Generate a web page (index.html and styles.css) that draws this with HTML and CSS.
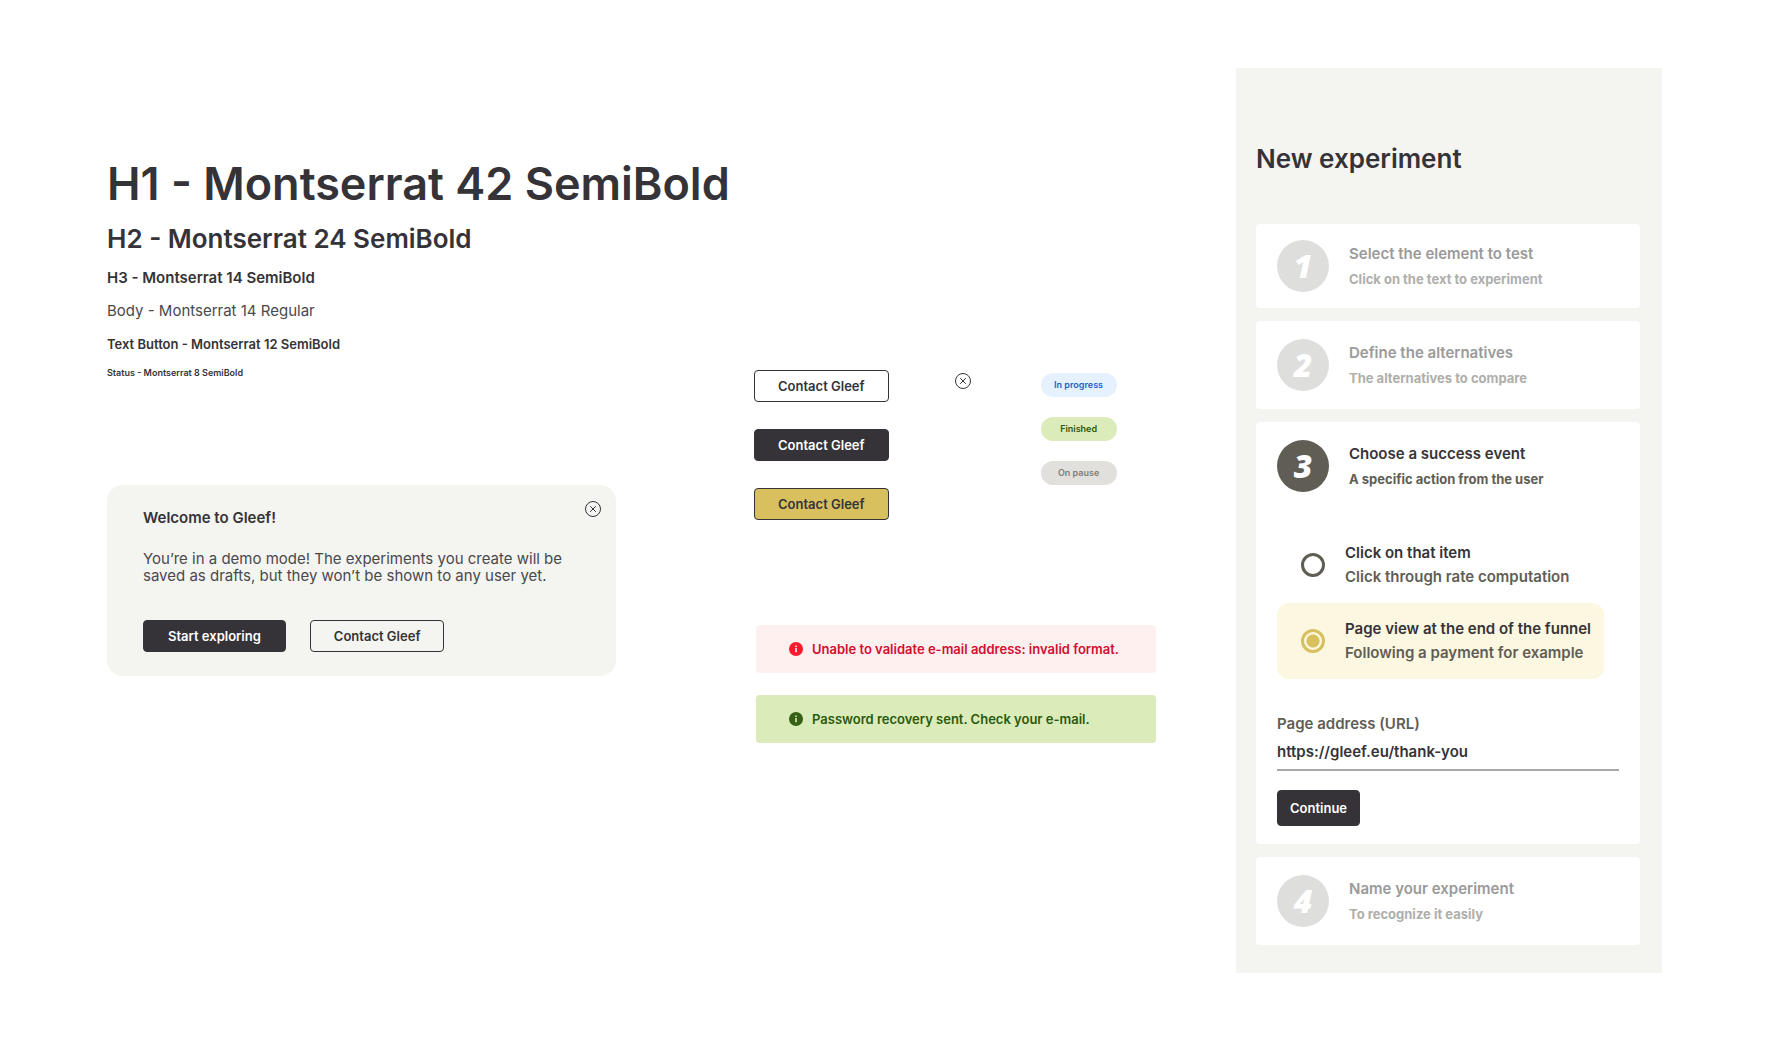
FILE: index.html
```html
<!DOCTYPE html>
<html lang="en">
<head>
<meta charset="utf-8">
<meta name="viewport" content="width=device-width, initial-scale=1">
<title>Gleef design system</title>
<link rel="stylesheet" href="styles.css">
</head>
<body>
<main class="board">
  <div class="column-type">
    <section class="type-scale">
      <h1 class="type-h1">H1 - Montserrat 42 SemiBold</h1>
      <h2 class="type-h2">H2 - Montserrat 24 SemiBold</h2>
      <h3 class="type-h3">H3 - Montserrat 14 SemiBold</h3>
      <p class="type-body">Body - Montserrat 14 Regular</p>
      <p class="type-button">Text Button - Montserrat 12 SemiBold</p>
      <p class="type-status">Status - Montserrat 8 SemiBold</p>
    </section>

    <section class="welcome">
      <button class="close welcome-close" type="button" aria-label="Close">
        <svg viewBox="0 0 16 16" width="16" height="16"><circle cx="8" cy="8" r="7.5"/><path d="M5.2 5.2l5.6 5.6M10.8 5.2l-5.6 5.6"/></svg>
      </button>
      <h3 class="type-h3">Welcome to Gleef!</h3>
      <p class="welcome-text">You’re in a demo mode! The experiments you create will be saved as drafts, but they won’t be shown to any user yet.</p>
      <div class="welcome-actions">
        <button class="btn btn-dark" type="button">Start exploring</button>
        <button class="btn" type="button">Contact Gleef</button>
      </div>
    </section>
  </div>

  <div class="column-parts">
    <section class="parts">
      <div class="part-buttons">
        <button class="btn" type="button">Contact Gleef</button>
        <button class="btn btn-dark" type="button">Contact Gleef</button>
        <button class="btn btn-gold" type="button">Contact Gleef</button>
      </div>
      <button class="close part-close" type="button" aria-label="Close">
        <svg viewBox="0 0 16 16" width="16" height="16"><circle cx="8" cy="8" r="7.5"/><path d="M5.2 5.2l5.6 5.6M10.8 5.2l-5.6 5.6"/></svg>
      </button>
      <div class="part-badges">
        <span class="badge badge-progress">In progress</span>
        <span class="badge badge-finished">Finished</span>
        <span class="badge badge-pause">On pause</span>
      </div>
    </section>

    <section class="alerts">
      <p class="alert alert-error">
        <svg class="alert-icon" viewBox="0 0 14 14" width="14" height="14"><circle cx="7" cy="7" r="7"/><path d="M6.2 3.6h1.6v1.5H6.2zM6.2 6h1.6v4.2H6.2z"/></svg>
        Unable to validate e-mail address: invalid format.
      </p>
      <p class="alert alert-success">
        <svg class="alert-icon" viewBox="0 0 14 14" width="14" height="14"><circle cx="7" cy="7" r="7"/><path d="M6.2 3.6h1.6v1.5H6.2zM6.2 6h1.6v4.2H6.2z"/></svg>
        Password recovery sent. Check your e-mail.
      </p>
    </section>
  </div>

  <form class="panel">
    <h2 class="type-h2">New experiment</h2>
    <div class="steps">
      <section class="step step-compact">
        <header class="step-head">
          <span class="step-number">1</span>
          <div class="step-titles">
            <h3 class="step-title">Select the element to test</h3>
            <p class="step-hint">Click on the text to experiment</p>
          </div>
        </header>
      </section>
      <section class="step">
        <header class="step-head">
          <span class="step-number">2</span>
          <div class="step-titles">
            <h3 class="step-title">Define the alternatives</h3>
            <p class="step-hint">The alternatives to compare</p>
          </div>
        </header>
      </section>
      <section class="step step-active">
        <header class="step-head">
          <span class="step-number">3</span>
          <div class="step-titles">
            <h3 class="step-title">Choose a success event</h3>
            <p class="step-hint">A specific action from the user</p>
          </div>
        </header>
        <div class="options">
          <label class="option">
            <input class="option-radio" type="radio" name="event" value="click">
            <span class="option-text">
              <span class="option-title">Click on that item</span>
              <span class="option-hint">Click through rate computation</span>
            </span>
          </label>
          <label class="option">
            <input class="option-radio" type="radio" name="event" value="view" checked>
            <span class="option-text">
              <span class="option-title">Page view at the end of the funnel</span>
              <span class="option-hint">Following a payment for example</span>
            </span>
          </label>
        </div>
        <div class="field">
          <label class="field-label" for="url">Page address (URL)</label>
          <input class="field-input" id="url" type="text" value="https://gleef.eu/thank-you">
        </div>
        <button class="btn btn-dark btn-continue" type="button">Continue</button>
      </section>
      <section class="step">
        <header class="step-head">
          <span class="step-number">4</span>
          <div class="step-titles">
            <h3 class="step-title">Name your experiment</h3>
            <p class="step-hint">To recognize it easily</p>
          </div>
        </header>
      </section>
    </div>
  </form>
</main>
</body>
</html>
```
FILE: styles.css
```css
:root {
  --ink: #353338;
  --stone: #605d55;
  --sand: #f4f5f0;
  --gold: #d9c05f;
  --leaf: #dbebb9;
}

* {
  box-sizing: border-box;
}

body {
  margin: 0;
  background: #fff;
  color: var(--ink);
  font: 600 15px/20px Inter, "Open Sans", sans-serif;
}

h1, h2, h3, p {
  margin: 0;
  font-weight: 600;
}

button, input {
  font: inherit;
  color: inherit;
}

.board {
  display: grid;
  grid-template-columns: minmax(0, 617fr) minmax(0, 452fr) minmax(0, 426fr);
  column-gap: 30px;
  align-items: start;
  padding: 68px 110px 68px 107px;
}

/* Type scale */
.column-type {
  padding-top: 90px;
}

.type-scale {
  display: flex;
  flex-direction: column;
  gap: 13px;
  white-space: nowrap;
}

.type-h1 {
  font-size: 45px;
  line-height: 52px;
}

.type-h2 {
  font-size: 26px;
  line-height: 32px;
}

.type-h3 {
  font-size: 15px;
}

.type-body {
  color: #4a484d;
  font-weight: 400;
}

.type-button {
  font-size: 13px;
}

.type-status {
  font-size: 9px;
  line-height: 12px;
}

/* Welcome card */
.welcome {
  position: relative;
  max-width: 509px;
  margin-top: 106px;
  padding: 23px 36px 24px;
  border-radius: 16px;
  background: var(--sand);
}

.welcome-close {
  position: absolute;
  top: 16px;
  right: 15px;
}

.welcome-text {
  margin-top: 22px;
  color: #4a484d;
  font-weight: 400;
  line-height: 17px;
}

.welcome-actions {
  display: flex;
  gap: 24px;
  margin-top: 36px;
}

.welcome-actions .btn-dark {
  padding: 0 24px;
}

/* Buttons */
.btn {
  height: 32px;
  padding: 0 23px;
  border: 1px solid var(--ink);
  border-radius: 4px;
  background: transparent;
  font-size: 13px;
  white-space: nowrap;
}

.btn-dark {
  background: var(--ink);
  color: #fff;
}

.btn-gold {
  background: var(--gold);
}

.btn-continue {
  height: 36px;
  margin-top: 19px;
  padding: 0 12px;
}

.close {
  display: block;
  width: 16px;
  height: 16px;
  padding: 0;
  border: 0;
  background: none;
}

.close svg {
  display: block;
  fill: none;
  stroke: var(--ink);
}

/* Component samples */
.column-parts {
  padding: 302px 50px 0 0;
}

.parts {
  display: flex;
  align-items: flex-start;
}

.part-buttons {
  display: flex;
  flex-direction: column;
  gap: 27px;
}

.part-close {
  margin: 3px 70px 0 66px;
}

.part-badges {
  display: flex;
  flex-direction: column;
  gap: 20px;
  padding-top: 3px;
}

.badge {
  width: 76px;
  border-radius: 12px;
  font-size: 9px;
  line-height: 24px;
  text-align: center;
}

.badge-progress {
  background: #e5f1fe;
  color: #2260c8;
}

.badge-finished {
  background: var(--leaf);
  color: #2b5a0c;
}

.badge-pause {
  background: #e2e0dc;
  color: #807e79;
}

.alerts {
  display: flex;
  flex-direction: column;
  gap: 22px;
  margin-top: 105px;
  padding-left: 2px;
}

.alert {
  display: flex;
  align-items: center;
  gap: 9px;
  height: 48px;
  padding: 0 33px;
  border-radius: 4px;
  font-size: 13px;
  white-space: nowrap;
}

.alert-icon {
  flex: none;
}

.alert-error {
  background: #fff0f0;
  color: #d20f30;
}

.alert-error circle {
  fill: #fb1b2f;
}

.alert-error path {
  fill: #fff0f0;
}

.alert-success {
  background: var(--leaf);
  color: #2b5a0c;
}

.alert-success circle {
  fill: #376017;
}

.alert-success path {
  fill: var(--leaf);
}

/* New experiment panel */
.panel {
  padding: 75px 22px 28px 20px;
  background: var(--sand);
}

.steps {
  display: flex;
  flex-direction: column;
  gap: 13px;
  margin-top: 49px;
}

.step {
  padding: 18px 21px;
  border-radius: 4px;
  background: #fff;
}

.step-compact {
  padding: 16px 21px;
}

.step-head {
  display: flex;
  align-items: center;
  gap: 20px;
}

.step-number {
  flex: none;
  width: 52px;
  border-radius: 50%;
  background: #dededd;
  color: #fff;
  font: italic 800 32px/52px "Open Sans", Lato, sans-serif;
  text-align: center;
}

.step-titles {
  display: flex;
  flex-direction: column;
  gap: 5px;
}

.step-title {
  color: #9a9a9b;
  font-size: 15px;
}

.step-hint {
  color: #afaeab;
  font-size: 13px;
  font-weight: 700;
}

.step-active .step-number {
  background: var(--stone);
}

.step-active .step-title {
  color: var(--ink);
}

.step-active .step-hint {
  color: var(--stone);
}

.options {
  max-width: 327px;
  margin-top: 35px;
}

.option {
  display: flex;
  align-items: center;
  gap: 20px;
  height: 76px;
  padding-left: 24px;
  border-radius: 12px;
  line-height: 24px;
  white-space: nowrap;
}

.option:has(:checked) {
  background: #fcf7e0;
}

.option-radio {
  appearance: none;
  flex: none;
  width: 24px;
  height: 24px;
  margin: 0;
  border: 3px solid var(--stone);
  border-radius: 50%;
}

.option-radio:checked {
  border-color: var(--gold);
  background: radial-gradient(circle, var(--gold) 6px, transparent 7px);
}

.option-text {
  display: flex;
  flex-direction: column;
}

.option-hint {
  color: var(--stone);
}

.field {
  display: flex;
  flex-direction: column;
  gap: 7px;
  margin-top: 35px;
}

.field-label {
  color: var(--stone);
}

.field-input {
  width: 100%;
  height: 30px;
  padding: 0 0 8px;
  border: 0;
  border-bottom: 2px solid #aaa8a5;
  border-radius: 0;
  background: none;
  outline: 0;
}
```
